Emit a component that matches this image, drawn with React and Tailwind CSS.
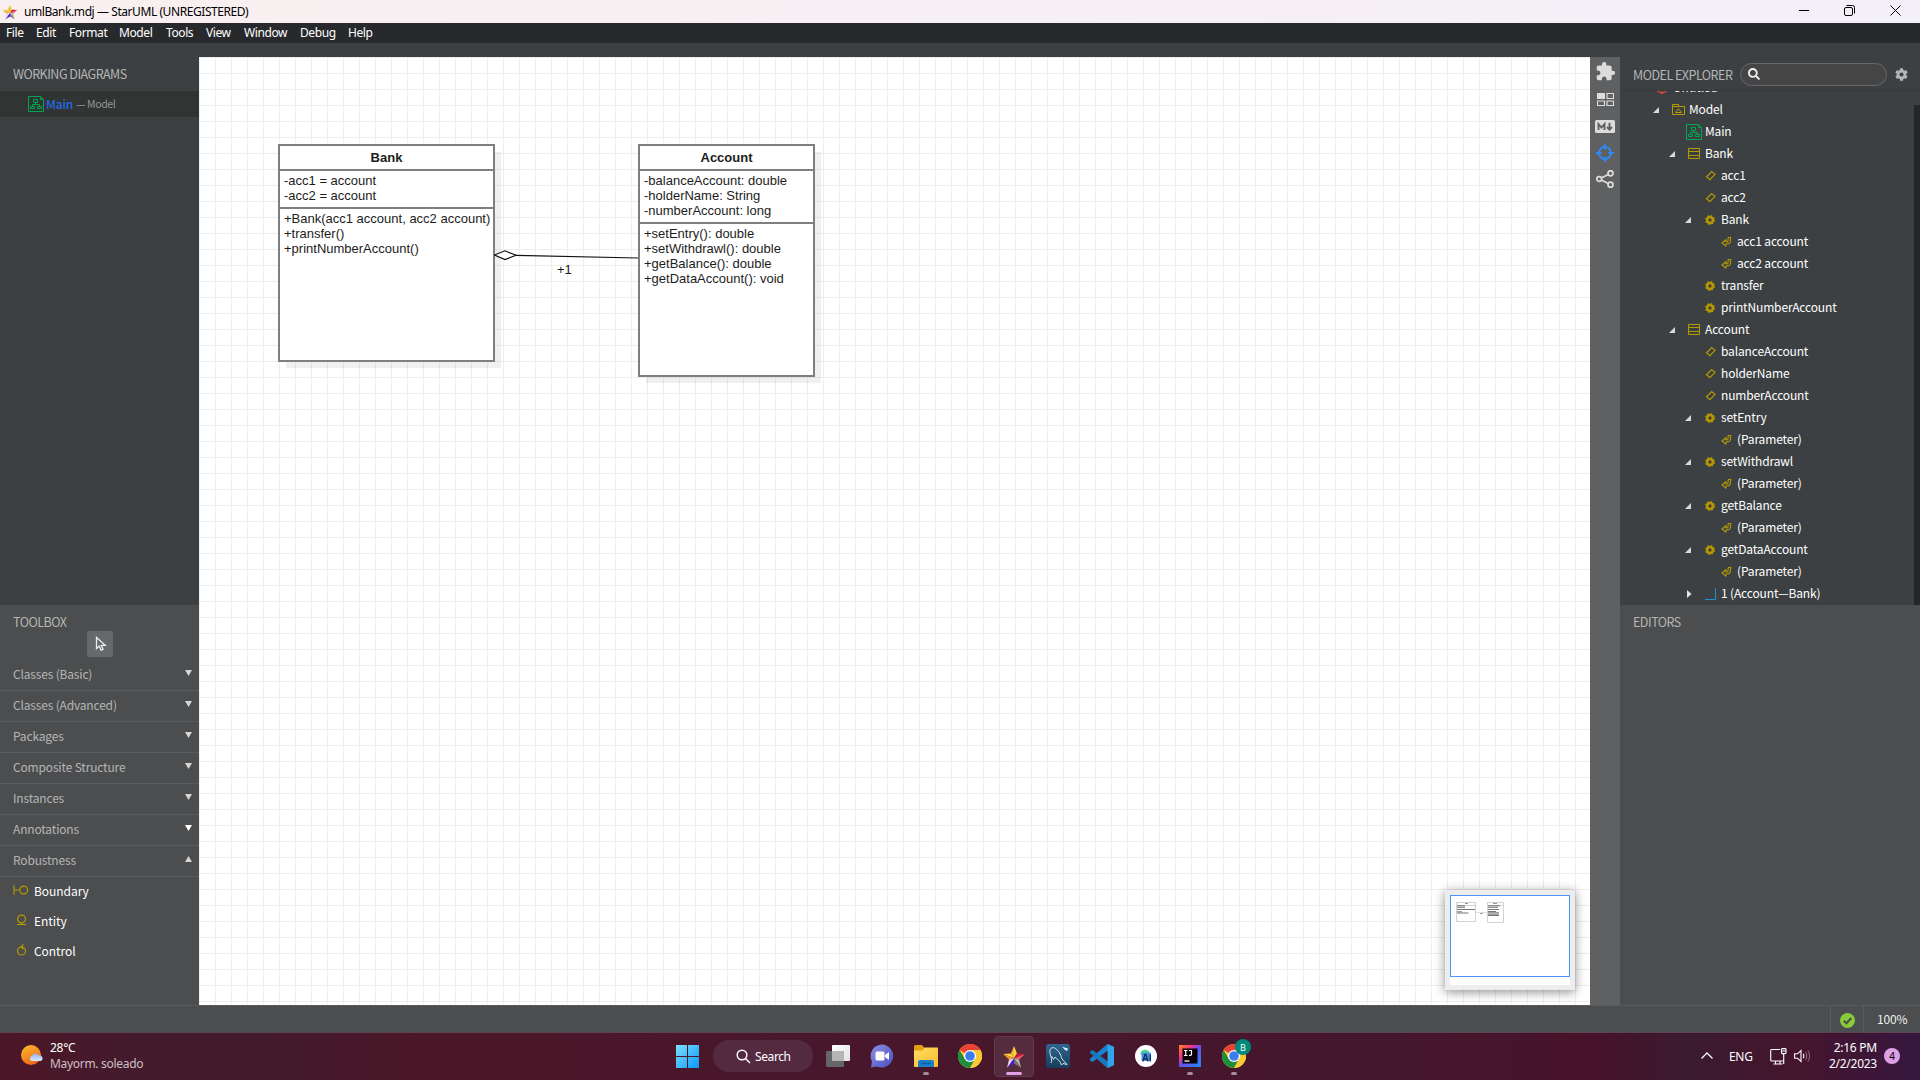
import { FaSearch, FaCog } from "react-icons/fa";
import { MdExtension } from "react-icons/md";

const UI = "font-['Noto_Sans_CJK_SC','Noto_Sans',sans-serif]";
const SYS = "font-['Noto_Sans','Open_Sans',sans-serif]";

/* ---------- small drawings ---------- */

function Star({ size }) {
  return (
    <svg width={size} height={size} viewBox="0 0 24 24" className="shrink-0">
      <path d="M12 1 L9 8.6 L12 13.2 Z" fill="#f7b924" />
      <path d="M12 1 L15 8.6 L12 13.2 Z" fill="#fbd23c" />
      <path d="M1 9 L9 8.6 L12 13.2 Z" fill="#fbd23c" />
      <path d="M1 9 L7 14.4 L12 13.2 Z" fill="#eda01c" />
      <path d="M23 9 L15 8.6 L12 13.2 Z" fill="#c4153f" />
      <path d="M23 9 L17 14.4 L12 13.2 Z" fill="#ef5a6c" />
      <path d="M19 23 L17 14.4 L12 13.2 Z" fill="#b9b4b6" />
      <path d="M19 23 L12 18.6 L12 13.2 Z" fill="#77716f" />
      <path d="M5 23 L12 18.6 L12 13.2 Z" fill="#4a17c8" />
      <path d="M5 23 L7 14.4 L12 13.2 Z" fill="#e4d6f4" />
    </svg>
  );
}

function DiagramIcon() {
  return (
    <svg width="16" height="16" viewBox="0 0 16 16" fill="none" stroke="#00a651" className="shrink-0">
      <path d="M.5.5H12.5L15.5 3.5V15.5H.5Z M12.5.5V3.5H15.5" />
      <path d="M5.5 3.500h4v3h-4z M2.500 10.500h4v2h-4z M9.500 10.500h4v2h-4z M7.500 6.500v2 M4.500 10.500v-2h7v2" />
    </svg>
  );
}

const GOLD = "#b59a00";

function TreeIcon({ type }) {
  if (type === "diagram") return <DiagramIcon />;
  return (
    <svg width="16" height="16" viewBox="0 0 16 16" fill="none" stroke={GOLD} className="shrink-0 overflow-visible">
      {type === "project" && (
        <path stroke="#d0473a" strokeWidth="1.3" d="M8 0L14 3.500V10L8 13.500L2 10V3.500Z M2 3.500L8 7L14 3.500M8 7V13.500" />
      )}
      {type === "model" && (
        <path d="M2.500 12.500V2.500H8.500V4.500H14.500V12.500ZM2.500 4.500H8.500M5.500 10.500H11.500L8.500 6.800Z" />
      )}
      {type === "class" && <path d="M2.500 2.500H13.500V12.500H2.500ZM2.500 5.500H13.500M2.500 9.500H13.500" />}
      {type === "attr" && <path strokeWidth="1.200" d="M9.800 3.600L13 6.300L7.800 11.600L4.500 8.800Z" />}
      {type === "op" && (
        <g>
          <circle cx="8" cy="8" r="2.800" strokeWidth="2.300" />
          <circle cx="8" cy="8" r="4.200" strokeWidth="1.500" strokeDasharray="1.900 1.400" />
        </g>
      )}
      {type === "param" && (
        <path strokeWidth="1.100" d="M10.300 3.500H12.700L12.200 8.300L10.800 9.800H8.300L7.800 12L4 9L7.800 5.800V7.700H9.800Z" />
      )}
      {type === "assoc" && <path stroke="#1f8fd6" d="M3 13.500H13.500V2" />}
    </svg>
  );
}

function Chrome() {
  return (
    <svg width="24" height="24" viewBox="0 0 24 24">
      <circle cx="12" cy="12" r="12" fill="#fcc934" />
      <path d="M12 12L1.600 6A12 12 0 0 1 22.400 6Z" fill="#ea4335" />
      <path d="M12 6H22.400A12 12 0 0 0 12 0Z" fill="#ea4335" />
      <path d="M1.600 6A12 12 0 0 0 12 24L17.200 15L12 12L6.800 15Z" fill="#1e8e3e" />
      <path d="M12 24A12 12 0 0 0 22.400 6H12L17.200 15Z" fill="#fcc934" />
      <circle cx="12" cy="12" r="6" fill="#fff" />
      <circle cx="12" cy="12" r="4.800" fill="#3b7ded" />
    </svg>
  );
}

/* ---------- top bars ---------- */

const menus = [
  ["File", "w-[30px]"],
  ["Edit", "w-[33px]"],
  ["Format", "w-[50px]"],
  ["Model", "w-[47px]"],
  ["Tools", "w-[40px]"],
  ["View", "w-[38px]"],
  ["Window", "w-[56px]"],
  ["Debug", "w-[48px]"],
  ["Help", "w-[40px]"],
];

function TitleBar() {
  return (
    <header className="flex h-[23px] shrink-0 items-center justify-between bg-linear-to-r from-[#f9eff0] to-[#f4f0f8] pl-[2px] pr-[19px]">
      <div className="flex items-center gap-[6px]">
        <Star size={16} />
        <span className={`${SYS} text-[12px] leading-[22px] tracking-[-0.43px] text-black`}>umlBank.mdj — StarUML (UNREGISTERED)</span>
      </div>
      <div className="flex items-center gap-[35px] pb-[2px] text-black">
        <svg width="10" height="11" viewBox="0 0 10 11" stroke="currentColor"><path d="M0 5.500H10" /></svg>
        <svg width="11" height="11" viewBox="0 0 11 11" fill="none" stroke="currentColor">
          <rect x=".5" y="2.500" width="8" height="8" rx="1.500" />
          <path d="M2.500 .5H8.500A2 2 0 0 1 10.500 2.500V8.500" />
        </svg>
        <svg width="11" height="11" viewBox="0 0 11 11" stroke="currentColor"><path d="M.5.5L10.500 10.500M10.500.5L.5 10.500" /></svg>
      </div>
    </header>
  );
}

function MenuBar() {
  return (
    <nav className={`${SYS} flex h-[20px] shrink-0 bg-[#28292c] pl-[6px] text-[12px] leading-[19px] tracking-[-0.4px] text-white`}>
      {menus.map(([m, w]) => (
        <span key={m} className={`${w} whitespace-nowrap`}>{m}</span>
      ))}
    </nav>
  );
}

/* ---------- left side ---------- */

const groups = ["Classes (Basic)", "Classes (Advanced)", "Packages", "Composite Structure", "Instances", "Annotations", "Robustness"];

function LeftSide() {
  return (
    <aside className={`${UI} flex w-[199px] shrink-0 flex-col`}>
      <section className="h-[548px] bg-[#3c4042]">
        <h2 className="h-[34px] pl-[13px] text-[12.5px] leading-[33px] tracking-[-0.5px] text-[#b4b5b5]">WORKING DIAGRAMS</h2>
        <div className="flex h-[26px] items-center bg-[#303534] pl-[28px] leading-[16px]">
          <DiagramIcon />
          <span className="ml-[2px] pb-px text-[12px] font-medium tracking-[-0.17px] text-[#2469e8]">Main</span>
          <span className="ml-[3px] text-[10.5px] tracking-[-0.4px] text-[#939595]">— Model</span>
        </div>
      </section>
      <section className="flex-1 bg-[#4c4d4e]">
        <h2 className="h-[26px] pl-[13px] text-[12.5px] leading-[33px] tracking-[-0.5px] text-[#b4b5b5]">TOOLBOX</h2>
        <div className="ml-[87px] flex h-[26px] w-[26px] items-center justify-center rounded-[3px] bg-[#66686b] pl-[2px]">
          <svg width="12" height="16" viewBox="0 0 12 16" fill="none" stroke="#eee" strokeWidth="1.300">
            <path d="M1.500 1.500V12.500L4.300 10L6 14.200L8 13.300L6.300 9.300H10.200Z" />
          </svg>
        </div>
        <div className="mt-[3px]">
          {groups.map((g, i) => (
            <div key={g} className="flex h-[31px] items-center justify-between border-b border-[#5a5b5c] pl-[13px] pr-[7px]">
              <span className="pb-[2px] text-[12px] tracking-[-0.17px] text-[#b4b5b5]">{g}</span>
              <svg width="7" height="6" viewBox="0 0 7 6" className="-mt-[4px]" fill={i === 5 ? "#fff" : "#d6d6d6"}>
                {i === 6 ? <path d="M0 6H7L3.500 0Z" /> : <path d="M0 0H7L3.500 6Z" />}
              </svg>
            </div>
          ))}
        </div>
        <div className="text-[12px] tracking-[-0.05px] text-white">
          <div className="flex h-[30px] items-center pl-[13px]">
            <svg width="16" height="12" viewBox="0 0 16 12" className="mr-[5px] -mt-[4px]" fill="none" stroke={GOLD} strokeWidth="1.200">
              <path d="M1 1.500V10.500M1 6H6.500" /><circle cx="10.700" cy="6" r="3.900" />
            </svg>
            <span className="pb-[2px]">Boundary</span>
          </div>
          <div className="flex h-[30px] items-center pl-[13px]">
            <svg width="16" height="12" viewBox="0 0 16 12" className="mr-[5px] -mt-[4px]" fill="none" stroke={GOLD} strokeWidth="1.200">
              <circle cx="8.500" cy="5" r="3.900" /><path d="M4 10.500H13M8.500 9V10.500" />
            </svg>
            <span className="pb-[2px]">Entity</span>
          </div>
          <div className="flex h-[30px] items-center pl-[13px]">
            <svg width="16" height="12" viewBox="0 0 16 12" className="mr-[5px] -mt-[4px]" fill="none" stroke={GOLD} strokeWidth="1.200">
              <circle cx="8.500" cy="7" r="4" /><path d="M10.500 .5L8 3L10.500 5" />
            </svg>
            <span className="pb-[2px]">Control</span>
          </div>
        </div>
      </section>
    </aside>
  );
}

/* ---------- diagram ---------- */

function ClassNode({ name, attrs, ops, className }) {
  return (
    <div className={`absolute flex flex-col border-2 border-[#7f7f7f] bg-white shadow-[7px_7px_0_-1px_rgba(0,0,0,0.06)] ${className}`}>
      <div className="h-[23px] text-center text-[13px] leading-[23px] font-bold">{name}</div>
      <div className="border-t-2 border-[#7f7f7f] pt-[2px] pb-[4px] pl-[4px]">
        {attrs.map((a) => <div key={a} className="h-[15px] whitespace-nowrap leading-[15px]">{a}</div>)}
      </div>
      <div className="border-t-2 border-[#7f7f7f] pt-[2px] pl-[4px]">
        {ops.map((a) => <div key={a} className="h-[15px] whitespace-nowrap leading-[15px]">{a}</div>)}
      </div>
    </div>
  );
}

function MiniMap() {
  return (
    <div className="absolute right-[15px] bottom-[15px] h-[100px] w-[130px] bg-[#ededed] p-[5px] shadow-[0_2px_10px_rgba(0,0,0,0.45)]">
      <div className="h-[90px] bg-white">
        <div className="h-[82px] border border-[#4a96f5]">
          <svg width="118" height="80" viewBox="0 0 118 80" fill="none">
            <g stroke="#d2d2d2">
              <path d="M5.500 6.500H24.500V25.500H5.500ZM5.500 9.500H24.500M36.500 6.500H52.500V26.500H36.500ZM36.500 9.500H52.500" />
              <path d="M25 16.500H36" stroke="#e2e2e2" />
            </g>
            <g stroke="#666" strokeWidth=".9">
              <path d="M14 7.500H17M42 7.500H46" stroke="#888" />
              <path d="M6 9.800H14M6 11.300H14M6 13.500H24M6 15.800H11M6 17H17.500" />
              <path d="M37 9.800H49M37 11.300H47M37 13.500H48M37 15.500H45M37 16.800H48M37 18.200H48M37 19.500H48" />
              <path d="M29.500 17.500H31.500" />
            </g>
          </svg>
        </div>
      </div>
    </div>
  );
}

function Canvas() {
  return (
    <main className="relative flex-1 overflow-hidden bg-white bg-[linear-gradient(to_right,#eeeeee_1px,transparent_1px),linear-gradient(to_bottom,#eeeeee_1px,transparent_1px)] bg-[size:16px_16px] font-['Liberation_Sans',Arial,sans-serif] text-[13px] text-[#1c1c1c]">
      <ClassNode
        name="Bank"
        className="left-[79px] top-[87px] h-[218px] w-[217px]"
        attrs={["-acc1 = account", "-acc2 = account"]}
        ops={["+Bank(acc1 account, acc2 account)", "+transfer()", "+printNumberAccount()"]}
      />
      <ClassNode
        name="Account"
        className="left-[439px] top-[87px] h-[233px] w-[177px]"
        attrs={["-balanceAccount: double", "-holderName: String", "-numberAccount: long"]}
        ops={["+setEntry(): double", "+setWithdrawl(): double", "+getBalance(): double", "+getDataAccount(): void"]}
      />
      <svg width="144" height="12" viewBox="0 0 144 12" className="absolute left-[295px] top-[192px]" fill="none" stroke="#111" strokeWidth="1.200">
        <path d="M22 6.300L144 9" />
        <path d="M0.500 6L11 1.800L22 6.300L11 10.500Z" fill="#fff" />
      </svg>
      <span className="absolute left-[358px] top-[205px] leading-[15px]">+1</span>
      <MiniMap />
    </main>
  );
}

/* ---------- right side ---------- */

function IconStrip() {
  return (
    <div className="flex w-[30px] shrink-0 flex-col items-center bg-[#5f6062] pt-[5px] text-[#dcdcdc]">
      <div className="flex h-[20px] items-center pb-px"><MdExtension size={21} /></div>
      <div className="mt-[7px] flex h-[20px] items-center">
        <svg width="17" height="13" viewBox="0 0 17 13" fill="none" stroke="currentColor">
          <rect x=".5" y=".5" width="7" height="5" fill="currentColor" />
          <path d="M10 .5H16.500V5.500H10ZM.5 8H7.500V12.500H.5ZM10 8H16.500V12.500H10Z" strokeWidth="1.200" />
        </svg>
      </div>
      <div className="mt-[7px] flex h-[20px] items-center">
        <svg width="20" height="13" viewBox="0 0 20 13">
          <rect width="20" height="13" rx="1.500" fill="currentColor" />
          <path d="M3.500 10V4L6.500 7.500L9.500 4V10M14.500 2.800V9M12 7L14.500 9.700L17 7" fill="none" stroke="#5f6062" strokeWidth="1.900" />
        </svg>
      </div>
      <div className="mt-[7px] flex h-[20px] items-center">
        <svg width="18" height="18" viewBox="0 0 18 18" fill="none" stroke="#2e8bf5" strokeWidth="1.800">
          <circle cx="9" cy="9" r="6" /><path d="M9 0V5.500M9 12.500V18M0 9H5.500M12.500 9H18" />
        </svg>
      </div>
      <div className="mt-[6px] flex h-[20px] items-center">
        <svg width="18" height="18" viewBox="0 0 18 18" fill="none" stroke="currentColor" strokeWidth="1.700">
          <circle cx="3.200" cy="9" r="2.400" /><circle cx="14.500" cy="3.300" r="2.500" /><circle cx="14.500" cy="14.700" r="2.500" />
          <path d="M5.400 8L12.200 4.400M5.400 10L12.200 13.600" />
        </svg>
      </div>
    </div>
  );
}

const tree = [
  [0, "project", "Untitled", "o"],
  [1, "model", "Model", "o"],
  [2, "diagram", "Main"],
  [2, "class", "Bank", "o"],
  [3, "attr", "acc1"],
  [3, "attr", "acc2"],
  [3, "op", "Bank", "o"],
  [4, "param", "acc1 account"],
  [4, "param", "acc2 account"],
  [3, "op", "transfer"],
  [3, "op", "printNumberAccount"],
  [2, "class", "Account", "o"],
  [3, "attr", "balanceAccount"],
  [3, "attr", "holderName"],
  [3, "attr", "numberAccount"],
  [3, "op", "setEntry", "o"],
  [4, "param", "(Parameter)"],
  [3, "op", "setWithdrawl", "o"],
  [4, "param", "(Parameter)"],
  [3, "op", "getBalance", "o"],
  [4, "param", "(Parameter)"],
  [3, "op", "getDataAccount", "o"],
  [4, "param", "(Parameter)"],
  [3, "assoc", "1 (Account—Bank)", "c"],
];
const indent = ["pl-[17px]", "pl-[33px]", "pl-[49px]", "pl-[65px]", "pl-[81px]"];

function RightSide() {
  return (
    <aside className={`${UI} flex w-[300px] shrink-0 flex-col`}>
      <section className="flex h-[548px] flex-col bg-[#3c4042]">
        <div className="flex h-[34px] shrink-0 items-center border-b border-[#35393b] pt-px pl-[13px] pr-[12px]">
          <h2 className="w-[107px] whitespace-nowrap pt-px text-[12.5px] leading-[18px] tracking-[-0.5px] text-[#b4b5b5]">MODEL EXPLORER</h2>
          <div className="flex h-[23px] w-[147px] items-center rounded-full border border-[#66696b] bg-[#454546] pl-[7px] text-[#ececec]">
            <FaSearch size={12} />
          </div>
          <FaCog size={13} className="ml-[8px] shrink-0 text-[#b4b5b5]" />
        </div>
        <div className="flex min-h-0 flex-1">
          <div className="flex-1 overflow-hidden">
            <ul className="-mt-[14px] text-[12px] tracking-[-0.15px] text-white">
              {tree.map(([lvl, type, label, state], i) => (
                <li key={i} className={`flex h-[22px] items-center whitespace-nowrap ${indent[lvl]}`}>
                  <span className="flex w-[17px] shrink-0">
                    {state === "o" && <svg width="6" height="6" viewBox="0 0 6 6" fill="#d8d8d8"><path d="M6 0V6H0Z" /></svg>}
                    {state === "c" && <svg width="5" height="8" viewBox="0 0 5 8" className="ml-[2px]" fill="#e4e4e4"><path d="M0 0L4.500 4L0 8Z" /></svg>}
                  </span>
                  <TreeIcon type={type} />
                  <span className="ml-[3px] pb-[2px] leading-[20px]">{label}</span>
                </li>
              ))}
            </ul>
          </div>
          <div className="mt-[14px] w-[6px] bg-[#262626]" />
        </div>
      </section>
      <section className="flex-1 bg-[#4c4d4e]">
        <h2 className="pl-[13px] text-[12.5px] leading-[33px] tracking-[-0.5px] text-[#b4b5b5]">EDITORS</h2>
      </section>
    </aside>
  );
}

function StatusBar() {
  return (
    <footer className={`${UI} flex h-[27px] shrink-0 justify-end border-t border-[#58595a] bg-[#4c4d4e]`}>
      <div className="flex w-[34px] items-center justify-center border-x border-[#5a5b5c] pt-[3px]">
        <svg width="15" height="15" viewBox="0 0 15 15">
          <circle cx="7.500" cy="7.500" r="7.500" fill="#86cc3a" />
          <path d="M3.800 7.800L6.400 10.300L11.300 5" fill="none" stroke="#4c4d4e" strokeWidth="2" />
        </svg>
      </div>
      <div className="w-[56px] pl-[13px] text-[12px] leading-[25px] tracking-[-0.2px] text-[#f0f0f0]">100%</div>
    </footer>
  );
}

/* ---------- taskbar ---------- */

function App44({ children, dot }) {
  return (
    <div className="flex h-[48px] w-[44px] flex-col items-center">
      <div className="flex h-[39px] items-center justify-center pt-[7px]">{children}</div>
      {dot && <div className="h-[3px] w-[6px] rounded-full bg-[#a58c9a]" />}
    </div>
  );
}

function Taskbar() {
  return (
    <footer className={`${SYS} flex h-[48px] shrink-0 items-start border-t border-[#5d4550] bg-[linear-gradient(to_right,#4c1627_0,#431b2c_140px,#431b2c_260px,#4b1628_440px,#48172c_900px,#45172c_1400px,#47132a_1590px,#3a1a30_1690px,#45152d_1800px,#361740_1920px)] text-[12px] text-white`}>
      <div className="flex w-[665px] pl-[20px] pt-[8px]">
        <svg width="24" height="24" viewBox="0 0 24 24" className="mt-[2px]">
          <defs>
            <linearGradient id="sun" x1="0" y1="0" x2=".5" y2="1"><stop stopColor="#fbc02d" /><stop offset="1" stopColor="#ee6a1c" /></linearGradient>
            <linearGradient id="cloud" x1="0" y1="0" x2="0" y2="1"><stop stopColor="#8fb2ee" /><stop offset="1" stopColor="#dbe8fb" /></linearGradient>
          </defs>
          <circle cx="11" cy="12" r="10" fill="url(#sun)" />
          <path d="M11.500 18A2.800 2.800 0 0 1 12 12.800A3.800 3.800 0 0 1 18.800 12.500A2.800 2.800 0 0 1 20.500 18Z" fill="url(#cloud)" />
        </svg>
        <div className="ml-[6px] tracking-[-0.3px]">
          <div className="h-[16px] leading-[14px]">28°C</div>
          <div className="h-[16px] leading-[14px] text-[#cfbfc6]">Mayorm. soleado</div>
        </div>
      </div>
      <App44>
        <svg width="23" height="23" viewBox="0 0 23 23">
          <defs><linearGradient id="win" x1="0" y1="0" x2="1" y2="1"><stop stopColor="#7fe0ff" /><stop offset="1" stopColor="#0a98f8" /></linearGradient></defs>
          <path d="M0 0H11V11H0ZM12 0H23V11H12ZM0 12H11V23H0ZM12 12H23V23H12Z" fill="url(#win)" />
        </svg>
      </App44>
      <div className="ml-[4px] mr-[3px] mt-[7px] flex h-[32px] w-[100px] items-center rounded-full bg-[#542a40] pl-[23px]">
        <svg width="15" height="15" viewBox="0 0 15 15" fill="none" stroke="#fff" strokeWidth="1.500">
          <circle cx="6" cy="6" r="4.800" /><path d="M9.500 9.500L14 14" />
        </svg>
        <span className="ml-[4px] pt-[2px] leading-[18px] tracking-[-0.4px]">Search</span>
      </div>
      <App44>
        <svg width="24" height="22" viewBox="0 0 24 22">
          <defs><linearGradient id="tv" x1="0" y1="0" x2="1" y2="1"><stop stopColor="#fff" /><stop offset="1" stopColor="#e2e2e2" /></linearGradient></defs>
          <rect x="0" y="6" width="18" height="16" rx="1" fill="#666" />
          <rect x="6" y="0" width="18" height="16" rx="1" fill="url(#tv)" />
          <rect x="6" y="6" width="12" height="10" fill="#b5b5b5" />
        </svg>
      </App44>
      <App44>
        <svg width="24" height="24" viewBox="0 0 24 24">
          <defs><linearGradient id="chat" x1="0" y1="0" x2="1" y2="1"><stop stopColor="#8f8fe6" /><stop offset="1" stopColor="#4a4fc0" /></linearGradient></defs>
          <path d="M12 .5A11.500 11.500 0 1 1 7 22.500L1 23.500L2 17.500A11.500 11.500 0 0 1 12 .5Z" fill="url(#chat)" />
          <rect x="5.500" y="7.500" width="9" height="9" rx="1.500" fill="#fff" /><path d="M15 11L19 8V16L15 13Z" fill="#fff" />
        </svg>
      </App44>
      <App44 dot>
        <svg width="24" height="23" viewBox="0 0 24 23">
          <defs><linearGradient id="fold" x1="0" y1="0" x2="1" y2="1"><stop stopColor="#ffdd66" /><stop offset="1" stopColor="#f8bd2a" /></linearGradient></defs>
          <path d="M0 1.500Q0 0 1.500 0H8L10.500 3H22.500Q24 3 24 4.500V8H0Z" fill="#e2a00c" />
          <path d="M0 5.500H8.500L10.500 2.500H24V21Q24 22 23 22H1Q0 22 0 21Z" fill="url(#fold)" />
          <path d="M4 22V17Q4 15 6 15H18Q20 15 20 17V22Z" fill="#1a80cc" /><path d="M7 18.500H17" stroke="#0c5da0" strokeWidth="1.400" />
        </svg>
      </App44>
      <App44><Chrome /></App44>
      <div className="mt-[3px] ml-[2px] mr-[2px] flex h-[41px] w-[40px] flex-col items-center rounded-[4px] border border-[#613a4d] bg-[#552b3e] pt-[8px]">
        <Star size={24} />
        <div className="mt-[3px] h-[3px] w-[16px] shrink-0 rounded-full bg-[#dfa0e8]" />
      </div>
      <App44>
        <svg width="24" height="24" viewBox="0 0 24 24">
          <defs><linearGradient id="my" x1="0" y1="0" x2="0" y2="1"><stop stopColor="#2f6690" /><stop offset="1" stopColor="#173d5c" /></linearGradient></defs>
          <rect width="24" height="24" rx="3" fill="url(#my)" />
          <path d="M5 19C7 15 3 10 4 6C5 3 8 3 10 5C14 8 15 12 16 15L21 20.500L17 19.500L15.500 21C14.500 17 11 15 9 13L7.500 15.500L5.500 12" fill="none" stroke="#d5e4ee" strokeWidth="1" />
          <path d="M16 2.500L18.500 3.500L22 4.500L21 7L18.500 5.500Z" fill="#e4eef5" />
        </svg>
      </App44>
      <App44>
        <svg width="24" height="24" viewBox="0 0 24 24">
          <path d="M17.500 0L24 3V21L17.500 24L7 14.500L2.500 18L0 16.500V14.800L17.500 0Z" fill="#1684cf" />
          <path d="M17.500 24L24 21V3L17.500 0V24Z" fill="#2fa4ea" />
          <path d="M0 9V7.500L2.500 6L17.500 17.300V24L0 9Z" fill="#1878bd" />
          <path d="M17.500 6.800V17.200L10.500 12Z" fill="#45172c" />
        </svg>
      </App44>
      <App44>
        <svg width="22" height="22" viewBox="0 0 22 22">
          <circle cx="11" cy="11" r="11" fill="#fff" />
          <path d="M5.500 9A4.600 4.600 0 0 1 14.500 8V9.500H5.500Z" fill="#3ddc84" />
          <rect x="6.500" y="7.500" width="9.500" height="8.500" rx="1" fill="#4a90ea" />
          <path d="M7.800 16.500L10 9.500H11L13 16.500M9 14H12M15.300 9.500V16.500" fill="none" stroke="#0c3050" strokeWidth="1.300" />
        </svg>
      </App44>
      <App44 dot>
        <svg width="22" height="22" viewBox="0 0 22 22">
          <defs><linearGradient id="ij" x1="0" y1="0" x2="1" y2="1"><stop stopColor="#fd8a1c" /><stop offset=".3" stopColor="#f2357b" /><stop offset=".5" stopColor="#6a4ff0" /><stop offset="1" stopColor="#1a8cff" /></linearGradient></defs>
          <rect width="22" height="22" fill="url(#ij)" /><rect x="3.500" y="3.500" width="15" height="15" fill="#0a0006" />
          <path d="M5 5.500H8.500M6.750 5.500V10.500M5 10.500H8.500M10 5.500H13M12.500 5.500V9.500Q12.500 10.600 10 10.400" fill="none" stroke="#fff" strokeWidth="1.200" />
          <path d="M5.500 16H10.500" stroke="#fff" strokeWidth="1.300" />
        </svg>
      </App44>
      <App44 dot>
        <div className="relative">
          <Chrome />
          <span className="absolute -top-[5px] left-[13px] flex h-[16px] w-[16px] items-center justify-center rounded-full bg-[#00897b] text-[9px] leading-none">B</span>
        </div>
      </App44>
      <div className="ml-auto flex h-[47px] items-center pr-[20px]">
        <svg width="12" height="7" viewBox="0 0 12 7" fill="none" stroke="#fff" strokeWidth="1.300" className="mr-[16px] mb-[2px]"><path d="M.5 6.500L6 1L11.500 6.500" /></svg>
        <span className="mr-[17px] w-[24px] text-[12px] tracking-[-0.3px]">ENG</span>
        <svg width="17" height="17" viewBox="0 0 17 17" fill="none" stroke="#fff" strokeWidth="1.100" className="mr-[7px] mb-px">
          <path d="M10 1.500H1.500Q.7 1.500 .7 2.500V12Q.7 13 1.500 13H13.500M5.500 13V16M10 13V16M3.500 16H12.500" />
          <rect x="11.500" y=".6" width="4.500" height="5" rx=".8" /><path d="M13.700 5.600V16M11.500 3H16" />
        </svg>
        <svg width="17" height="14" viewBox="0 0 17 14" fill="none" stroke="#fff" strokeWidth="1.100" className="mr-[12px] mb-px">
          <path d="M.6 4.800H3.500L7 1.500V12.500L3.500 9.200H.6Z" /><path d="M9.200 4.700Q10.800 7 9.200 9.300" />
          <path d="M11.500 3Q14 7 11.500 11M13.800 1.500Q17.500 7 13.800 12.500" stroke="#85647a" />
        </svg>
        <div className="-mt-px w-[54px] text-right tracking-[-0.25px]">
          <div className="h-[16px] leading-[16px]">2:16 PM</div>
          <div className="h-[16px] leading-[16px]">2/2/2023</div>
        </div>
        <span className="mb-px ml-[7px] flex h-[16px] w-[16px] items-center justify-center rounded-full bg-[#dd9fe6] text-[10px] leading-none text-black">4</span>
      </div>
    </footer>
  );
}

export default function App() {
  return (
    <div className="flex h-[1080px] w-[1920px] flex-col overflow-hidden bg-[#3c4042]">
      <TitleBar />
      <MenuBar />
      <div className="h-[14px] shrink-0 bg-[#3c4042]" />
      <div className="flex min-h-0 flex-1">
        <LeftSide />
        <Canvas />
        <IconStrip />
        <RightSide />
      </div>
      <StatusBar />
      <Taskbar />
    </div>
  );
}
